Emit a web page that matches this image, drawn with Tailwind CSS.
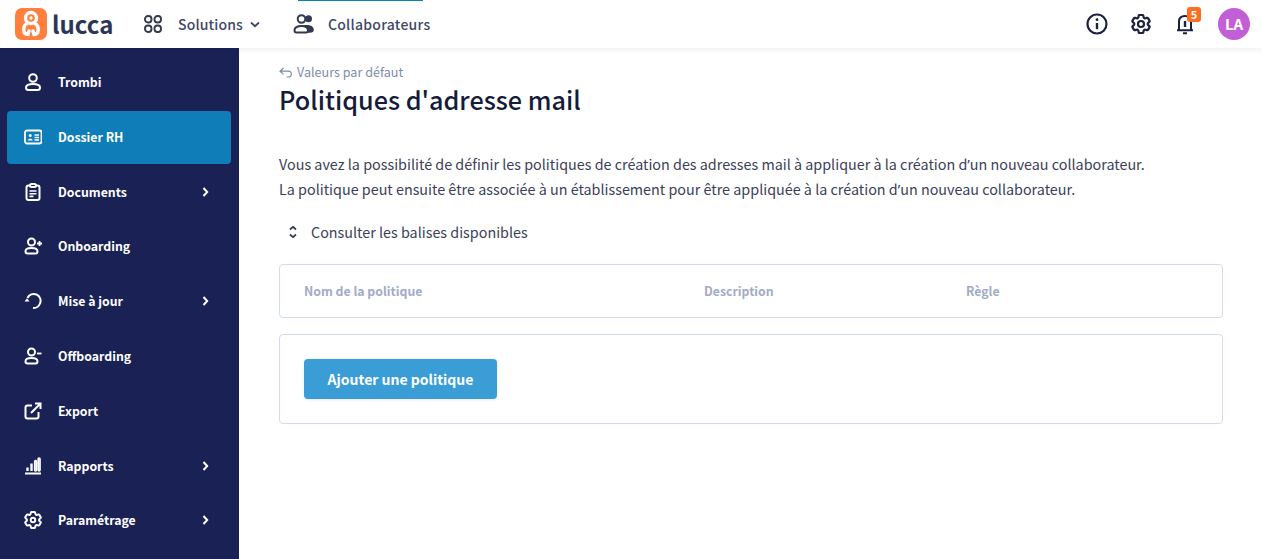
<!DOCTYPE html>
<html lang="fr">
<head>
  <meta charset="UTF-8" />
  <title>Politiques d'adresse mail | Lucca</title>
  <script src="https://cdn.jsdelivr.net/npm/@tailwindcss/browser@4"></script>
</head>
<body class="bg-white h-[559px] w-[1262px] overflow-hidden flex flex-col font-['Noto_Sans_CJK_SC','Source_Sans_Pro','Noto_Sans',sans-serif] text-[#1b2240]">

<header class="relative z-10 h-12 shrink-0 bg-white shadow-[0_2px_6px_rgba(20,30,70,0.07)] flex items-center">
  <!-- logo -->
  <div class="flex items-center ml-[15px] w-[100px]">
    <svg width="32" height="32" viewBox="0 0 32 32" class="shrink-0">
      <rect x="0" y="0" width="32" height="32" rx="7" fill="#ff7f3f"/>
      <circle cx="16" cy="10" r="5.500" fill="none" stroke="#fff" stroke-width="3.400"/>
      <path d="M12 15.500C7.500 18 7.500 26.500 13 26.500L14 23M20 15.500C24.500 18 24.500 26.500 19 26.500L18 23" fill="none" stroke="#fff" stroke-width="3.400" stroke-linecap="round"/>
      <circle cx="16" cy="10" r="1.700" fill="#fff"/>
    </svg>
    <span class="ml-[5px] text-[24px] leading-8 font-bold text-[#2c3558]">lucca</span>
  </div>
  <!-- solutions -->
  <div class="flex items-center ml-[29px]">
    <svg width="18" height="18" viewBox="0 0 18 18" fill="none" stroke="#33394f" stroke-width="1.900">
      <rect x="1" y="1" width="6.500" height="6.500" rx="3"/>
      <rect x="10.500" y="1" width="6.500" height="6.500" rx="3"/>
      <rect x="1" y="10.500" width="6.500" height="6.500" rx="3"/>
      <rect x="10.500" y="10.500" width="6.500" height="6.500" rx="3"/>
    </svg>
    <span class="ml-[16px] text-[14px] leading-6 font-medium text-[#3e4768] tracking-[0.15px]">Solutions</span>
    <svg width="10" height="7" viewBox="0 0 10 7" fill="none" stroke="#3e4768" stroke-width="1.800" class="ml-[7px]"><path d="M1 1.500L5 5.200L9 1.500"/></svg>
  </div>
  <!-- active tab -->
  <div class="relative flex items-center h-12 ml-[33px]">
    <div class="absolute top-0 left-[5px] w-[125px] h-[1px] bg-[#0f7db8]"></div>
    <svg width="21" height="20" viewBox="0 0 21 20">
      <circle cx="15.500" cy="4.800" r="3.500" fill="#33394f"/>
      <path d="M10 11.500C17 10 21 12.500 20.800 16C20.700 17.800 19.500 18.800 17 18.800H10Z" fill="#33394f"/>
      <circle cx="8.500" cy="5" r="3.800" fill="#fff" stroke="#33394f" stroke-width="2"/>
      <path d="M1.500 16.500C1.500 13.500 4 12 8.500 12C13 12 15 13.500 15 16.500C15 18 14 18.500 13 18.500H3.500C2.300 18.500 1.500 18 1.500 16.500Z" fill="#fff" stroke="#33394f" stroke-width="2"/>
    </svg>
    <span class="ml-[14px] text-[14px] leading-6 font-medium text-[#3e4768] tracking-[0.25px]">Collaborateurs</span>
  </div>
  <!-- right icons -->
  <div class="ml-auto flex items-center pr-3">
    <svg width="22" height="22" viewBox="0 0 22 22" fill="none" stroke="#1b2240" stroke-width="2.200">
      <circle cx="11" cy="11" r="9.500"/>
      <path d="M11 10V16.200" stroke-width="2.400"/>
      <circle cx="11" cy="6.700" r="1.400" fill="#1b2240" stroke="none"/>
    </svg>
    <svg width="20" height="20" viewBox="2 2 20 20" fill="none" stroke="#1b2240" stroke-width="2.200" class="ml-[23px]">
      <circle cx="12" cy="12" r="3"/>
      <path d="M9.594 3.940c.09-.542.56-.94 1.110-.94h2.593c.55 0 1.020.398 1.110.94l.213 1.281c.063.374.313.686.645.870.074.040.147.083.22.127.325.196.72.257 1.075.124l1.217-.456a1.125 1.125 0 0 1 1.370.49l1.296 2.247a1.125 1.125 0 0 1-.26 1.431l-1.003.827c-.293.241-.438.613-.43.992a7.723 7.723 0 0 1 0 .255c-.008.378.137.75.43.991l1.004.827c.424.35.534.955.26 1.430l-1.298 2.247a1.125 1.125 0 0 1-1.369.491l-1.217-.456c-.355-.133-.75-.072-1.076.124a6.470 6.470 0 0 1-.22.128c-.331.183-.581.495-.644.869l-.213 1.281c-.09.543-.56.94-1.110.94h-2.594c-.55 0-1.019-.398-1.110-.94l-.213-1.281c-.062-.374-.312-.686-.644-.87a6.520 6.520 0 0 1-.22-.127c-.325-.196-.72-.257-1.076-.124l-1.217.456a1.125 1.125 0 0 1-1.369-.49l-1.297-2.247a1.125 1.125 0 0 1 .26-1.431l1.004-.827c.292-.24.437-.613.43-.991a6.932 6.932 0 0 1 0-.255c.007-.38-.138-.751-.43-.992l-1.004-.827a1.125 1.125 0 0 1-.26-1.430l1.297-2.247a1.125 1.125 0 0 1 1.370-.491l1.216.456c.356.133.751.072 1.076-.124.072-.044.146-.086.22-.128.332-.183.582-.495.644-.869l.214-1.280Z"/>
    </svg>
    <div class="relative ml-[23px] w-[22px] h-[22px]">
      <svg width="22" height="22" viewBox="0 0 22 22" fill="none" stroke="#1b2240" stroke-width="2">
        <path d="M5 17V8.500C5 5 7.500 3 11 3C14.500 3 17 5 17 8.500V17M3 17.200H19M9 20.200H13"/>
        <path d="M11 8V14" stroke-width="2.400"/>
      </svg>
      <span class="absolute -top-[6px] left-[13px] w-[14px] h-[15px] rounded-[3px] bg-[#ff6d1f] text-white text-[11px] leading-[15px] font-bold text-center">5</span>
    </div>
    <div class="ml-[22px] w-8 h-8 rounded-full bg-[#c35fd6] text-white text-[15px] font-bold flex items-center justify-center">LA</div>
  </div>
</header>

<div class="flex flex-1 min-h-0">
  <nav class="w-[239px] shrink-0 bg-[#1a2155] pt-[8px] pl-[7px] pr-[8px] flex flex-col gap-[2.800px] text-white text-[12.300px] font-bold">
    <a class="h-[52px] rounded flex items-center pl-[17px] pr-[22px]">
      <svg width="18" height="18" viewBox="0 0 18 18" fill="none" stroke="#fff" stroke-width="2"><circle cx="9" cy="5" r="3.800"/><path d="M2 14.500C2 12 4.500 11 9 11C13.500 11 16 12 16 14.500C16 16 15 17 13.500 17H4.500C3 17 2 16 2 14.500Z"/></svg>
      <span class="ml-[16px] leading-5">Trombi</span>
    </a>
    <a class="h-[53px] -mb-px rounded bg-[#0f7db8] flex items-center pl-[17px] pr-[22px]">
      <svg width="18" height="18" viewBox="0 0 18 18" fill="none" stroke="#fff" stroke-width="1.800"><rect x="1" y="2.500" width="16.500" height="13" rx="2"/><circle cx="6.200" cy="7.500" r="1.500" fill="#fff" stroke="none"/><path d="M3.700 12.500C3.700 10 8.700 10 8.700 12.500Z" fill="#fff" stroke="none"/><path d="M10.500 7H15M10.500 9.500H15M10.500 12H15" stroke-width="1.300"/></svg>
      <span class="ml-[16px] leading-5">Dossier RH</span>
    </a>
    <a class="h-[52px] rounded flex items-center pl-[17px] pr-[22px]">
      <svg width="18" height="18" viewBox="0 0 18 18" fill="none" stroke="#fff" stroke-width="2"><path d="M6 2.500H4.500C3.300 2.500 2.500 3.300 2.500 4.500V15C2.500 16.200 3.300 17 4.500 17H13.500C14.700 17 15.500 16.200 15.500 15V4.500C15.500 3.300 14.700 2.500 13.500 2.500H12"/><rect x="6" y="1" width="6" height="3" rx="1.500"/><path d="M5.500 8H12.500M5.500 10.700H12.500M5.500 13.400H9.500" stroke-width="1.600"/></svg>
      <span class="ml-[16px] leading-5">Documents</span>
      <svg width="7" height="10" viewBox="0 0 7 10" fill="none" stroke="#fff" stroke-width="2" class="ml-auto"><path d="M1.500 1L5.200 5L1.500 9"/></svg>
    </a>
    <a class="h-[52px] rounded flex items-center pl-[17px] pr-[22px]">
      <svg width="18" height="18" viewBox="0 0 18 18" fill="none" stroke="#fff" stroke-width="2"><circle cx="7.500" cy="5" r="3.500"/><path d="M1.500 14.300C1.500 12 3.500 11 7.500 11C11.500 11 13.500 12 13.500 14.300C13.500 15.800 12.700 16.500 11.500 16.500H3.500C2.300 16.500 1.500 15.800 1.500 14.300Z"/><path d="M13 6.500H18M15.500 4V9" stroke-width="1.800"/></svg>
      <span class="ml-[16px] leading-5">Onboarding</span>
    </a>
    <a class="h-[52px] rounded flex items-center pl-[17px] pr-[22px]">
      <svg width="18" height="18" viewBox="0 0 18 18" fill="none" stroke="#fff" stroke-width="2"><path d="M3.500 6C5 2.500 9 1 12.500 2.500C16 4 17.500 8 16 11.500C14.800 14.500 12 16.200 9 16"/><path d="M0.500 9.500L3 6.300L5.500 9.500Z" fill="#fff" stroke="none"/></svg>
      <span class="ml-[16px] leading-5">Mise à jour</span>
      <svg width="7" height="10" viewBox="0 0 7 10" fill="none" stroke="#fff" stroke-width="2" class="ml-auto"><path d="M1.500 1L5.200 5L1.500 9"/></svg>
    </a>
    <a class="h-[52px] rounded flex items-center pl-[17px] pr-[22px]">
      <svg width="18" height="18" viewBox="0 0 18 18" fill="none" stroke="#fff" stroke-width="2"><circle cx="7.500" cy="5" r="3.500"/><path d="M1.500 14.300C1.500 12 3.500 11 7.500 11C11.500 11 13.500 12 13.500 14.300C13.500 15.800 12.700 16.500 11.500 16.500H3.500C2.300 16.500 1.500 15.800 1.500 14.300Z"/><path d="M13 6.500H17.500" stroke-width="1.800"/></svg>
      <span class="ml-[16px] leading-5">Offboarding</span>
    </a>
    <a class="h-[52px] rounded flex items-center pl-[17px] pr-[22px]">
      <svg width="18" height="18" viewBox="0 0 18 18" fill="none" stroke="#fff" stroke-width="2"><path d="M8 3.500H3.500C2 3.500 1.500 4 1.500 5.500V14.500C1.500 16 2 16.500 3.500 16.500H12.500C14 16.500 14.500 16 14.500 14.500V10"/><path d="M7 11L16.500 1.500M11 1.500H16.500V7"/></svg>
      <span class="ml-[16px] leading-5">Export</span>
    </a>
    <a class="h-[52px] rounded flex items-center pl-[17px] pr-[22px]">
      <svg width="18" height="18" viewBox="0 0 18 18" fill="none" stroke="#fff" stroke-width="1.700"><path d="M1 16.500H17" stroke-width="2"/><path d="M3.500 14V10.500M7.500 14V6.500" stroke-width="2.400"/><rect x="10.700" y="3.500" width="1.800" height="10.500" rx="0.900"/><rect x="14.200" y="1" width="1.800" height="13" rx="0.900"/></svg>
      <span class="ml-[16px] leading-5">Rapports</span>
      <svg width="7" height="10" viewBox="0 0 7 10" fill="none" stroke="#fff" stroke-width="2" class="ml-auto"><path d="M1.500 1L5.200 5L1.500 9"/></svg>
    </a>
    <a class="h-[52px] rounded flex items-center pl-[17px] pr-[22px]">
      <svg width="18" height="18" viewBox="2 2 20 20" fill="none" stroke="#fff" stroke-width="2.200"><circle cx="12" cy="12" r="2.500"/><path d="M9.594 3.940c.09-.542.56-.94 1.110-.94h2.593c.55 0 1.020.398 1.110.94l.213 1.281c.063.374.313.686.645.870.074.040.147.083.22.127.325.196.72.257 1.075.124l1.217-.456a1.125 1.125 0 0 1 1.370.49l1.296 2.247a1.125 1.125 0 0 1-.26 1.431l-1.003.827c-.293.241-.438.613-.43.992a7.723 7.723 0 0 1 0 .255c-.008.378.137.75.43.991l1.004.827c.424.35.534.955.26 1.430l-1.298 2.247a1.125 1.125 0 0 1-1.369.491l-1.217-.456c-.355-.133-.75-.072-1.076.124a6.470 6.470 0 0 1-.22.128c-.331.183-.581.495-.644.869l-.213 1.281c-.09.543-.56.94-1.110.94h-2.594c-.55 0-1.019-.398-1.110-.94l-.213-1.281c-.062-.374-.312-.686-.644-.87a6.520 6.520 0 0 1-.22-.127c-.325-.196-.72-.257-1.076-.124l-1.217.456a1.125 1.125 0 0 1-1.369-.49l-1.297-2.247a1.125 1.125 0 0 1 .26-1.431l1.004-.827c.292-.24.437-.613.43-.991a6.932 6.932 0 0 1 0-.255c.007-.38-.138-.751-.43-.992l-1.004-.827a1.125 1.125 0 0 1-.26-1.430l1.297-2.247a1.125 1.125 0 0 1 1.370-.491l1.216.456c.356.133.751.072 1.076-.124.072-.044.146-.086.22-.128.332-.183.582-.495.644-.869l.214-1.280Z"/></svg>
      <span class="ml-[16px] leading-5">Paramétrage</span>
      <svg width="7" height="10" viewBox="0 0 7 10" fill="none" stroke="#fff" stroke-width="2" class="ml-auto"><path d="M1.500 1L5.200 5L1.500 9"/></svg>
    </a>
  </nav>

  <main class="flex-1 pl-[40px] pr-[39px] pt-[15px]">
    <div class="flex items-center h-[18px] text-[12.600px] text-[#7f8bab]">
      <svg width="13" height="11" viewBox="0 0 13 11" fill="none" stroke="#7f8bab" stroke-width="1.200"><path d="M4.500 1L1 4.200L4.500 7.400M1 4.200H9C11 4.200 12.300 5.500 12.300 7.200C12.300 9 11 10 9 10H7.500"/></svg>
      <span class="ml-[5px] leading-[18px]">Valeurs par défaut</span>
    </div>
    <h1 class="text-[25.200px] leading-9 font-medium text-[#151c3a]">Politiques d'adresse mail</h1>
    <p class="mt-[35px] text-[14.350px] leading-6 text-[#3a4057]">Vous avez la possibilité de définir les politiques de création des adresses mail à appliquer à la création d<span class="font-['Noto_Sans']">’</span>un nouveau collaborateur.<br>La politique peut ensuite être associée à un établissement pour être appliquée à la création d<span class="font-['Noto_Sans']">’</span>un nouveau collaborateur.</p>
    <div class="mt-[18px] h-6 flex items-center text-[14.350px] text-[#3a4057]">
      <svg width="10" height="14" viewBox="0 0 10 14" fill="none" stroke="#33394f" stroke-width="1.700" class="ml-[9px]"><path d="M2 4.500L5 1.800L8 4.500M2 9.500L5 12.200L8 9.500"/></svg>
      <span class="ml-[13px] leading-6">Consulter les balises disponibles</span>
    </div>
    <div class="mt-[20px] h-[54px] rounded border border-[#d1dbea] grid grid-cols-[400px_262px_1fr] items-center pl-[24px] text-[12.300px] font-bold text-[#a1abc6]">
      <span>Nom de la politique</span>
      <span>Description</span>
      <span>Règle</span>
    </div>
    <div class="mt-[16px] h-[90px] rounded border border-[#d1dbea] pl-[24px] pt-[24px]">
      <button class="h-10 w-[193px] rounded bg-[#3a9dd6] text-white text-[14px] font-bold shadow-[0_1px_3px_rgba(20,30,70,0.1)]">Ajouter une politique</button>
    </div>
  </main>
</div>

</body>
</html>
